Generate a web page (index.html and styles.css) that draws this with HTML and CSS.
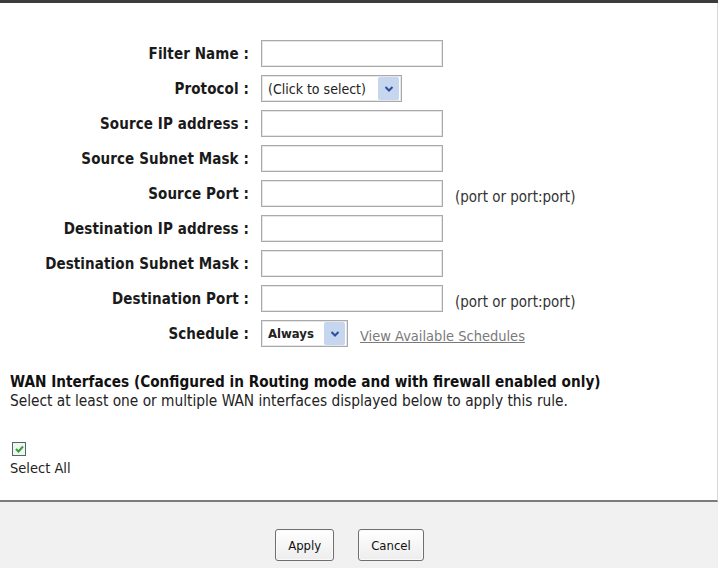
FILE: index.html
```html
<!DOCTYPE html>
<html lang="en">
<head>
<meta charset="utf-8">
<title>Add IP Filter</title>
<link rel="stylesheet" href="styles.css">
</head>
<body>
<div class="panel">
  <div class="content">
    <div class="form-grid">
      <label class="label">Filter Name :</label>
      <div class="field"><span class="textbox"></span></div>

      <label class="label">Protocol :</label>
      <div class="field">
        <div class="select select-protocol">
          <span class="select-text">(Click to select)</span>
          <span class="select-btn"><svg width="10" height="8" viewBox="0 0 10 8"><path d="M1.5 2 L5 5.5 L8.5 2" fill="none" stroke="#2a4f9c" stroke-width="2"/></svg></span>
        </div>
      </div>

      <label class="label">Source IP address :</label>
      <div class="field"><span class="textbox"></span></div>

      <label class="label">Source Subnet Mask :</label>
      <div class="field"><span class="textbox"></span></div>

      <label class="label">Source Port :</label>
      <div class="field"><span class="textbox"></span><span class="hint">(port or port:port)</span></div>

      <label class="label">Destination IP address :</label>
      <div class="field"><span class="textbox"></span></div>

      <label class="label">Destination Subnet Mask :</label>
      <div class="field"><span class="textbox"></span></div>

      <label class="label">Destination Port :</label>
      <div class="field"><span class="textbox"></span><span class="hint">(port or port:port)</span></div>

      <label class="label">Schedule :</label>
      <div class="field">
        <div class="select select-schedule">
          <span class="select-text bold">Always</span>
          <span class="select-btn"><svg width="10" height="8" viewBox="0 0 10 8"><path d="M1.5 2 L5 5.5 L8.5 2" fill="none" stroke="#2a4f9c" stroke-width="2"/></svg></span>
        </div>
        <a class="link" href="#">View Available Schedules</a>
      </div>
    </div>

    <div class="wan">
      <h2 class="wan-title">WAN Interfaces (Configured in Routing mode and with firewall enabled only)</h2>
      <p class="wan-desc">Select at least one or multiple WAN interfaces displayed below to apply this rule.</p>
      <div class="checkbox-group">
        <span class="checkbox"><svg width="9" height="8" viewBox="0 0 9 8"><path d="M1 4 L3.5 6.5 L8 1.5" fill="none" stroke="#3d9a3d" stroke-width="2"/></svg></span>
        <span class="checkbox-label">Select All</span>
      </div>
    </div>
  </div>

  <div class="footer">
    <button class="btn" type="button">Apply</button>
    <button class="btn" type="button">Cancel</button>
  </div>
</div>
</body>
</html>
```

FILE: styles.css
```css
html, body {
  margin: 0;
  padding: 0;
  height: 100%;
}

body {
  font-family: "DejaVu Sans Condensed", "DejaVu Sans", sans-serif;
  color: #111;
  background: #f1f1f1;
}

.panel {
  display: flex;
  flex-direction: column;
  height: 568px;
  border-top: 3px solid #3c3c3c;
  box-sizing: border-box;
}

.content {
  background: #fff;
  height: 499px;
  box-sizing: border-box;
  padding-top: 37px;
  border-right: 1px solid #d8d8d8;
  border-bottom: 2px solid #7c7c7c;
  box-shadow: 0 1px 0 #c9c9c9;
}

/* label / field table */
.form-grid {
  display: grid;
  grid-template-columns: 249px 1fr;
  column-gap: 12px;
  row-gap: 8px;
  align-items: center;
}

.label {
  text-align: right;
  font-weight: bold;
  font-size: 15px;
  letter-spacing: 0.1px;
  color: #1a1a1a;
}

.field {
  display: flex;
  align-items: center;
  height: 27px;
}

.textbox {
  display: block;
  width: 182px;
  height: 27px;
  box-sizing: border-box;
  border: 1px solid #a9a9a9;
  box-shadow: inset 0 0 0 1px #e6e6e6;
  background: #fff;
}

.hint {
  margin-left: 12px;
  font-size: 15px;
  color: #333;
  padding-top: 6px;
}

.select {
  display: flex;
  align-items: center;
  height: 27px;
  box-sizing: border-box;
  border: 1px solid #a9a9a9;
  box-shadow: inset 0 0 0 1px #e6e6e6;
  background: #fff;
  padding: 0 2px 0 6px;
}

.select-protocol { width: 141px; }
.select-schedule { width: 87px; }

.select-text {
  flex: 1;
  font-size: 14px;
  color: #222;
  white-space: nowrap;
}

.select-text.bold {
  font-weight: bold;
  font-size: 13px;
}

.select-btn {
  display: flex;
  align-items: center;
  justify-content: center;
  width: 21px;
  height: 23px;
  background: #c6d6ef;
  border-radius: 2px;
}

.link {
  margin-left: 12px;
  font-size: 14.5px;
  color: #7a7a7a;
  text-decoration: underline;
  padding-top: 4px;
}

/* WAN interface block */
.wan {
  padding: 26px 10px 0 10px;
}

.wan-title {
  margin: 0;
  font-size: 15.2px;
  font-weight: bold;
  color: #111;
  line-height: 18px;
}

.wan-desc {
  margin: 1px 0 0;
  font-size: 15.3px;
  color: #222;
  line-height: 18px;
}

.checkbox-group {
  display: flex;
  flex-direction: column;
  align-items: flex-start;
  margin-top: 32px;
}

.checkbox {
  display: flex;
  align-items: center;
  justify-content: center;
  width: 14px;
  height: 14px;
  box-sizing: border-box;
  border: 1px solid #4c6a6a;
  background: #eef6ee;
  margin-left: 2px;
}

.checkbox-label {
  margin-top: 4px;
  font-size: 14.5px;
  color: #222;
}

/* button bar */
.footer {
  flex: 1;
  display: flex;
  justify-content: center;
  align-items: flex-start;
  gap: 24px;
  padding-top: 27px;
  padding-right: 19px;
  background: #f1f1f1;
}

.btn {
  height: 32px;
  box-sizing: border-box;
  border: 1px solid #6f6f6f;
  border-radius: 3px;
  background: linear-gradient(#ffffff, #ededed);
  box-shadow: inset 0 0 0 1px #fafafa;
  font-family: "DejaVu Sans Condensed", "DejaVu Sans", sans-serif;
  font-size: 13px;
  color: #111;
  padding: 0 12px;
}
```
